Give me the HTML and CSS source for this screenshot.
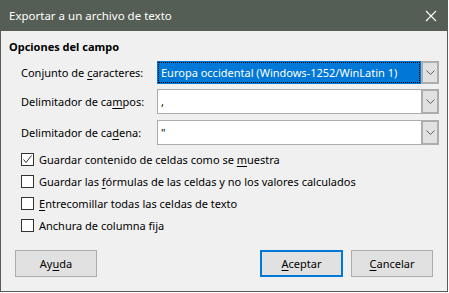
FILE: index.html
```html
<!DOCTYPE html>
<html lang="es">
<head>
<meta charset="utf-8">
<title>Exportar a un archivo de texto</title>
<link rel="stylesheet" href="styles.css">
</head>
<body>
<div class="window">
  <div class="titlebar">
    <span class="title">Exportar a un archivo de texto</span>
    <svg class="close" width="12" height="12" viewBox="0 0 12 12"><path d="M1 1 L11 11 M11 1 L1 11" stroke="#fff" stroke-width="1.1" fill="none"/></svg>
  </div>
  <div class="content">
    <div class="heading">Opciones del campo</div>
    <div class="fields">
      <div class="row r1">
        <span class="label">Conjunto de <u>c</u>aracteres:</span>
        <div class="combo">
          <div class="value selected"><span class="focus">Europa occidental (Windows-1252/WinLatin 1)</span></div>
          <div class="drop"><svg width="9" height="5" viewBox="0 0 9 5"><path d="M0.5 0.5 L4.5 4.5 L8.5 0.5" stroke="#606060" fill="none"/></svg></div>
        </div>
      </div>
      <div class="row r2">
        <span class="label">Delimitador de ca<u>m</u>pos:</span>
        <div class="combo">
          <div class="value entry">,</div>
          <div class="drop"><svg width="9" height="5" viewBox="0 0 9 5"><path d="M0.5 0.5 L4.5 4.5 L8.5 0.5" stroke="#606060" fill="none"/></svg></div>
        </div>
      </div>
      <div class="row r3">
        <span class="label">Delimitador de ca<u>d</u>ena:</span>
        <div class="combo">
          <div class="value entry">"</div>
          <div class="drop"><svg width="9" height="5" viewBox="0 0 9 5"><path d="M0.5 0.5 L4.5 4.5 L8.5 0.5" stroke="#606060" fill="none"/></svg></div>
        </div>
      </div>
    </div>
    <div class="checks">
      <div class="check"><span class="box"><svg width="11" height="11" viewBox="0 0 11 11"><path d="M1.5 5.5 L4 8.5 L9.5 1.5" stroke="#333" stroke-width="1" fill="none"/></svg></span><span>Guardar contenido de celdas como se <u>m</u>uestra</span></div>
      <div class="check"><span class="box"></span><span>Guardar las <u>f</u>órmulas de las celdas y no los valores calculados</span></div>
      <div class="check"><span class="box"></span><span><u>E</u>ntrecomillar todas las celdas de texto</span></div>
      <div class="check"><span class="box"></span><span>Anchura de columna fija</span></div>
    </div>
    <div class="buttons">
      <div class="btn">Ay<u>u</u>da</div>
      <div class="spacer"></div>
      <div class="btn default"><u>A</u>ceptar</div>
      <div class="btn"><u>C</u>ancelar</div>
    </div>
  </div>
</div>
</body>
</html>
```

FILE: styles.css
```css
html, body {
  margin: 0;
  padding: 0;
}
body {
  width: 449px;
  height: 293px;
  overflow: hidden;
  font-family: "Noto Sans", "Open Sans", sans-serif;
  font-size: 11px;
  color: #000;
}
.window {
  box-sizing: border-box;
  width: 448px;
  height: 292px;
  border: 1px solid #545e54;
  border-top: none;
  background: #f0f0f0;
  display: flex;
  flex-direction: column;
}
.titlebar {
  height: 31px;
  background: #545e54;
  color: #fff;
  display: flex;
  align-items: center;
  padding-left: 8px;
  padding-right: 10px;
  font-size: 11.5px;
}
.title { flex: 1; }
.close { display: block; }
.content {
  flex: 1;
  padding: 8px 8px 0 8px;
  display: flex;
  flex-direction: column;
}
.heading {
  font-weight: bold;
  height: 16px;
  line-height: 16px;
}
.fields {
  margin-top: 6px;
  padding-left: 12px;
  display: flex;
  flex-direction: column;
}
.row {
  display: flex;
  align-items: center;
}
.r1 { height: 23px; }
.r2 { height: 25px; margin-top: 5px; }
.r3 { height: 25px; margin-top: 6px; }
.label {
  width: 136px;
  flex: none;
}
.combo {
  display: flex;
  width: 282px;
  height: 100%;
}
.value {
  flex: 1;
  box-sizing: border-box;
  display: flex;
  align-items: center;
}
.selected {
  background: #0078d7;
  color: #fff;
  padding: 1px;
}
.focus {
  flex: 1;
  align-self: stretch;
  display: flex;
  align-items: center;
  padding-left: 2px;
  outline: 1px dotted #000;
  outline-offset: -1px;
  border: 1px dotted #fff;
}
.entry {
  background: #fff;
  border: 1px solid #acacac;
  border-right: none;
  padding-left: 3px;
}
.drop {
  width: 18px;
  box-sizing: border-box;
  border: 2px solid #adadad;
  background: #e1e1e1;
  display: flex;
  align-items: center;
  justify-content: center;
}
.checks {
  margin-top: 3px;
  padding-left: 12px;
}
.check {
  height: 22px;
  display: flex;
  align-items: center;
}
.box {
  box-sizing: border-box;
  width: 13px;
  height: 13px;
  border: 1px solid #333;
  background: #fff;
  margin-right: 5px;
  display: flex;
  align-items: center;
  justify-content: center;
}
.box svg { display: block; }
.buttons {
  margin-top: 14px;
  display: flex;
  padding-left: 6px;
  padding-right: 6px;
}
.spacer { flex: 1; }
.btn {
  box-sizing: border-box;
  width: 82px;
  height: 27px;
  border: 1px solid #adadad;
  background: #e1e1e1;
  display: flex;
  align-items: center;
  justify-content: center;
}
.btn + .btn { margin-left: 8px; }
.btn.default {
  width: 83px;
  border: 2px solid #0078d7;
}
u { text-decoration-thickness: 1px; text-underline-offset: 2px; }
```
